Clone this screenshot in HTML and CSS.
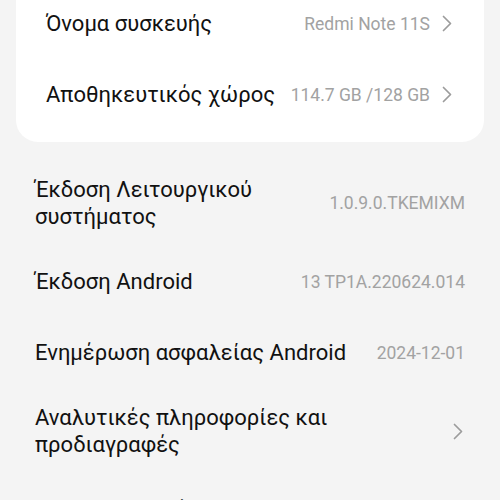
FILE: index.html
```html
<!DOCTYPE html>
<html lang="el">
<head>
    <meta charset="UTF-8">
    <meta name="viewport" content="width=device-width, initial-scale=1.0">
    <title>Σχετικά με το τηλέφωνο</title>
    <link rel="stylesheet" href="styles.css">
</head>
<body>
    <div class="page">
        <div class="card">
            <div class="row">
                <span class="label">Όνομα συσκευής</span>
                <span class="value">Redmi Note 11S</span>
                <svg class="chevron" viewBox="0 0 10 17"><path d="M1.5 1.5 L8.5 8.5 L1.5 15.5"/></svg>
            </div>
            <div class="row">
                <span class="label">Αποθηκευτικός χώρος</span>
                <span class="value">114.7 GB /128 GB</span>
                <svg class="chevron" viewBox="0 0 10 17"><path d="M1.5 1.5 L8.5 8.5 L1.5 15.5"/></svg>
            </div>
        </div>

        <div class="list">
            <div class="row">
                <span class="label">Έκδοση Λειτουργικού<br>συστήματος</span>
                <span class="value">1.0.9.0.TKEMIXM</span>
            </div>
            <div class="row">
                <span class="label">Έκδοση Android</span>
                <span class="value">13 TP1A.220624.014</span>
            </div>
            <div class="row">
                <span class="label">Ενημέρωση ασφαλείας Android</span>
                <span class="value">2024-12-01</span>
            </div>
            <div class="row">
                <span class="label">Αναλυτικές πληροφορίες και<br>προδιαγραφές</span>
                <svg class="chevron" viewBox="0 0 10 17"><path d="M1.5 1.5 L8.5 8.5 L1.5 15.5"/></svg>
            </div>
            <div class="row">
                <span class="label">Αναγνωριστικά πιστοποίησης και κανονισμοί</span>
            </div>
        </div>
    </div>
</body>
</html>
```

FILE: styles.css
```css
body {
    margin: 0;
    background-color: #f4f4f4;
    font-family: Roboto, "Noto Sans", sans-serif;
    overflow: hidden;
}
.page {
    margin-top: -24px;
}
.card {
    background-color: #ffffff;
    margin: 0 16px;
    padding: 12px 32px 12px 30px;
    border-radius: 22px;
}
.row {
    display: flex;
    align-items: center;
    min-height: 71px;
    gap: 12px;
}
.label {
    flex: 1;
    font-size: 22px;
    line-height: 27px;
    color: #111111;
    white-space: nowrap;
}
.value {
    font-size: 17.5px;
    color: #a2a2a2;
    white-space: nowrap;
}
.chevron {
    width: 10px;
    height: 17px;
    flex-shrink: 0;
}
.chevron path {
    fill: none;
    stroke: #9c9c9c;
    stroke-width: 1.7;
    stroke-linecap: round;
    stroke-linejoin: round;
}
.list {
    margin-top: 18px;
    padding: 0 35px 0 35px;
}
.list .row {
    padding: 16px 0;
    min-height: 39px;
}
.list .chevron {
    margin-right: 2px;
}
```
